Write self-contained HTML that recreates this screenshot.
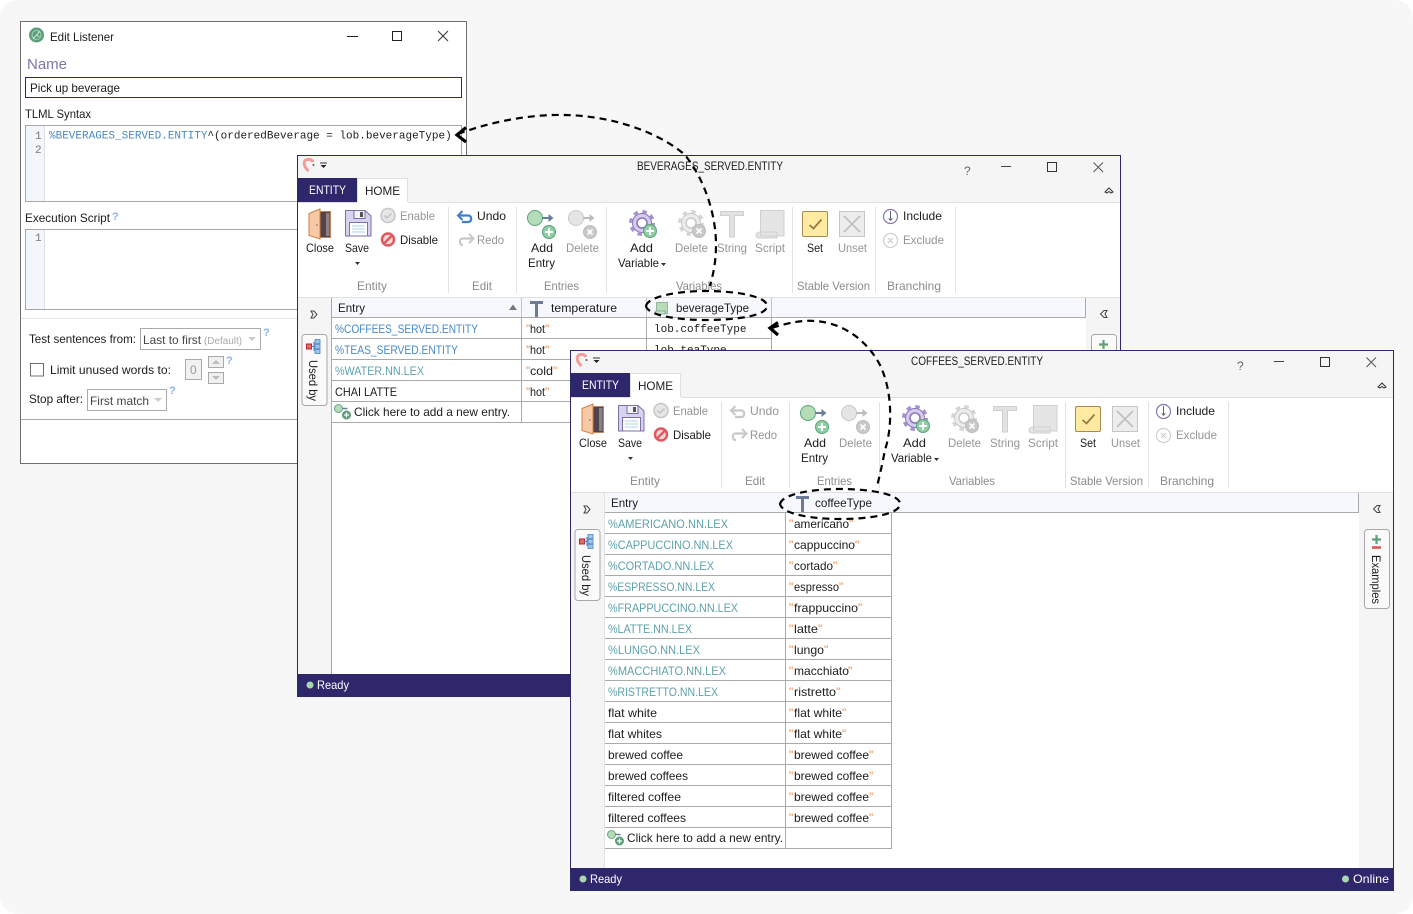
<!DOCTYPE html>
<html><head><meta charset="utf-8"><title>Listener</title>
<style>
html,body{margin:0;padding:0;background:#fff;width:1413px;height:914px;overflow:hidden}
svg{display:block;font-family:"Liberation Sans",sans-serif;font-size:12px}
text{fill:#1c1c1c}
.d{fill:#959595}.g{fill:#8b8b8b}.b{fill:#4a88c4}.c{fill:#5da2ab}.w{fill:#fff}
.m{font-family:"Liberation Mono",monospace;font-size:11px}
.q{fill:#ee8c4e}.h{fill:#8ab4e8;font-weight:bold}
</style></head><body>
<svg width="1413" height="914" viewBox="0 0 1413 914" xmlns="http://www.w3.org/2000/svg">
<defs>
<g id="tb">
<rect x="298" y="156" width="822" height="46" fill="#f5f5f5"/>
<path d="M308.500 171C303 166 303 160 307.500 159.500C310 159 312 160 313 162" fill="none" stroke="#f59c98" stroke-width="3"/><circle cx="313.500" cy="165" r="1" fill="#555"/>
<path d="M320 163h7" stroke="#333"/><path d="M320.500 165h6l-3 3z" fill="#222"/>
<path d="M1001 166.500h10" stroke="#444"/><rect x="1047.500" y="162.500" width="9" height="9" fill="none" stroke="#333"/><path d="M1093.500 162.500l9.500 9.500M1103 162.500l-9.500 9.500" stroke="#555" fill="none"/>
<path d="M1105 192l4-4 4 4-2 1-2-1.500-2 1.500z" fill="none" stroke="#333"/>
<rect x="298" y="178" width="59" height="24" fill="#2e276c"/>
<path d="M357.500 202V178.500H407.500V202" fill="#fff" stroke="#e0e0e0"/>
<rect x="298" y="203" width="822" height="94" fill="#fff"/><path d="M298 202.500h59M408 202.500h712M298 297.500h822" stroke="#e0e0e0"/>
<path d="M448.500 207v86M516.500 207v86M606.500 207v86M792.500 207v86M875.500 207v86M955.500 207v86" stroke="#e2e2e2"/>
<rect x="317.500" y="211.500" width="13" height="26" fill="#51434a" stroke="#c0875a"/><rect x="326" y="213" width="3.500" height="23" fill="#8b8087"/>
<path d="M309 213.500L320 209V239L309 235.500Z" fill="#f7c9a5" stroke="#d27f45"/><circle cx="317" cy="225" r=".8" fill="#a55"/>
<path d="M345.500 210.500H365L371 216V236H345.500Z" fill="#d8d2ee" stroke="#7b70a8"/><rect x="354" y="210.500" width="11" height="8" fill="#f3f2f8" stroke="#7b70a8"/><rect x="360" y="212" width="3" height="5" fill="#555"/><rect x="349.500" y="222.500" width="18" height="13.500" fill="#fff" stroke="#7b70a8"/><path d="M352 226h13M352 229h13M352 232h13" stroke="#a8d0ec"/>
<circle cx="388" cy="215.500" r="7" fill="#e6e6e6" stroke="#c6c6c6" stroke-width="1.500"/><path d="M384.500 215.500l2.500 2.500 4.500-4.500" fill="none" stroke="#bdbdbd" stroke-width="1.300"/>
<circle cx="388" cy="239.500" r="6" fill="#f9dada" stroke="#df5a60" stroke-width="2.500"/><path d="M384 243.500l8-8" stroke="#df5a60" stroke-width="2.500"/>
<circle cx="535" cy="218" r="7.500" fill="#b5dcb8" stroke="#5da279"/><path d="M542.500 218h7" stroke="#667f9c" stroke-width="2"/><path d="M548.500 214l5 4-5 4z" fill="#667f9c"/>
<circle cx="549" cy="232" r="6.500" fill="#8fcda2" stroke="#5da279"/><path d="M549 228v8M545 232h8" stroke="#fff" stroke-width="2"/>
<circle cx="576" cy="218" r="7.500" fill="#e5e5e5" stroke="#c8c8c8"/><path d="M583.500 218h7" stroke="#bcbcbc" stroke-width="2"/><path d="M589.500 214l5 4-5 4z" fill="#bcbcbc"/>
<circle cx="590" cy="232" r="6.500" fill="#c9c9c9" stroke="#bbb"/><path d="M587.500 229.500l5 5M592.500 229.500l-5 5" stroke="#fff" stroke-width="1.700"/>
<circle cx="642" cy="223" r="11.500" fill="none" stroke="#a692d0" stroke-width="3" stroke-dasharray="4.500 4.530"/><circle cx="642" cy="223" r="9.500" fill="#d5cbec" stroke="#8a76b8"/><circle cx="642" cy="223" r="5" fill="#fff" stroke="#8a76b8" stroke-width="1.500"/>
<circle cx="650" cy="231" r="6.500" fill="#8fcda2" stroke="#5da279"/><path d="M650 227v8M646 231h8" stroke="#fff" stroke-width="2"/>
<circle cx="691" cy="223" r="11.500" fill="none" stroke="#d5d5d5" stroke-width="3" stroke-dasharray="4.500 4.530"/><circle cx="691" cy="223" r="9.500" fill="#ececec" stroke="#c9c9c9"/><circle cx="691" cy="223" r="5" fill="#fff" stroke="#c9c9c9" stroke-width="1.500"/>
<circle cx="699" cy="231" r="6.500" fill="#c9c9c9" stroke="#bbb"/><path d="M696.500 228.500l5 5M701.500 228.500l-5 5" stroke="#fff" stroke-width="1.700"/>
<path d="M720.500 211.500h23v4h-9v21.500h-5V215.500h-9z" fill="#e2e2e2" stroke="#cfcfcf"/>
<path d="M760.500 210.500H784V236H762a5 3 0 0 1-1.500-1zM756 236a4 3.500 0 0 1 4-4h17v6h-17a4 3 0 0 1-4-2z" fill="#e5e5e5" stroke="#cfcfcf"/>
<rect x="802.500" y="211.500" width="25" height="25" rx="1.500" fill="#feeba1" stroke="#a98a4e"/><path d="M809.500 225l4 3.500 8-9" fill="none" stroke="#957a45" stroke-width="1.800"/>
<rect x="839.500" y="211.500" width="25" height="25" fill="#ededed" stroke="#c6c6c6"/><path d="M844 216l16 16M860 216l-16 16" stroke="#c2c2c2" stroke-width="1.800"/>
<circle cx="890.500" cy="216.500" r="7" fill="#fff" stroke="#8a76b0" stroke-width="1.200"/><path d="M890.500 211v8" stroke="#5b6685"/><path d="M888 218.500h5l-2.500 2.500z" fill="#5b6685"/>
<circle cx="890.500" cy="240.500" r="7" fill="#fff" stroke="#cfcfcf" stroke-width="1.200"/><path d="M888 238l5 5M893 238l-5 5" stroke="#c8c8c8"/>
<rect x="298" y="298" width="34" height="376" fill="#f5f5f5"/>
<rect x="1086" y="298" width="34" height="376" fill="#f5f5f5"/>
<path d="M311 311l3 0 3 3.500-3 3.500-3 0 2-3.500z" fill="none" stroke="#444"/>
<path d="M1107 310.500h-3l-3.500 3.500 3.500 3.500h3l-2-3.500z" fill="none" stroke="#444"/>
<rect x="298" y="674" width="822" height="23" fill="#2e276c"/><circle cx="310" cy="685" r="3.500" fill="#a9d8b0"/>
<rect x="302" y="334.500" width="25" height="71" rx="3" fill="#fafafa" stroke="#a8a8a8"/>
<rect x="306.500" y="344" width="5" height="5" fill="#e26a6a" stroke="#b23"/><path d="M311 346.500h3M314 342v9" stroke="#4a80c0"/><path d="M315 339.500h5v4h-5zM315 344.500h5v4h-5zM315 349.500h5v4h-5z" fill="#9ec6ec" stroke="#4a80c0" stroke-width=".8"/>
</g>
<path id="ht" d="M0 0h13v3h-5v13h-3V3H0z" fill="#6d7c96"/>
<g id="ca"><circle cx="4.500" cy="4.500" r="4" fill="#b5dcb8" stroke="#6aa57f"/><path d="M8.500 4.500h5" stroke="#667f9c" stroke-width="1.500"/><circle cx="12.500" cy="11" r="4.500" fill="#5d9d7b"/><path d="M12.500 8.500v5M10 11h5" stroke="#fff" stroke-width="1.300"/></g>
</defs>

<rect width="1413" height="914" rx="18" fill="#f7f7f7"/>

<!-- Window 1 -->
<rect x="20.500" y="21.500" width="446" height="442" fill="#fff" stroke="#6f6f6f"/>
<circle cx="36.500" cy="35" r="7.500" fill="#5a9f7a"/><circle cx="36.500" cy="35" r="4.500" fill="none" stroke="#a8d2b8"/><path d="M33 39l7-8M36.500 35l3 2" stroke="#cfe6d8" stroke-width="1"/>
<text x="50" y="41" textLength="64" lengthAdjust="spacingAndGlyphs">Edit Listener</text>
<path d="M347 36.500h11" stroke="#222"/><rect x="392.500" y="31.500" width="9" height="9" fill="none" stroke="#222"/><path d="M438 31l10 10M448 31l-10 10" stroke="#333"/>
<text x="27" y="69" style="font-size:15px;fill:#7d76a8" textLength="40" lengthAdjust="spacingAndGlyphs">Name</text>
<rect x="25.500" y="77.500" width="436" height="20" fill="#fff" stroke="#2e2769"/>
<text x="30" y="92" textLength="90" lengthAdjust="spacingAndGlyphs">Pick up beverage</text>
<text x="25" y="118" textLength="66" lengthAdjust="spacingAndGlyphs">TLML Syntax</text>
<rect x="25.500" y="125.500" width="436" height="76" fill="#fff" stroke="#a8a8a8"/>
<rect x="26" y="126" width="18" height="75" fill="#f4f6fe"/><path d="M44.500 126v75" stroke="#dcdee8"/>
<text class="m" x="35" y="139" style="fill:#777">1</text><text class="m" x="35" y="153" style="fill:#777">2</text>
<text class="m" x="49" y="138.500"><tspan class="b">%BEVERAGES_SERVED.ENTITY</tspan>^(orderedBeverage = lob.beverageType)</text>
<text x="25" y="222" textLength="85" lengthAdjust="spacingAndGlyphs">Execution Script</text><text class="h" x="112" y="220" style="font-size:11px">?</text>
<rect x="25.500" y="229.500" width="436" height="80" fill="#fff" stroke="#a8a8a8"/>
<rect x="26" y="230" width="18" height="79" fill="#f4f6fe"/><path d="M44.500 230v79" stroke="#dcdee8"/>
<text class="m" x="35" y="241" style="fill:#777">1</text>
<path d="M21 318.500h445" stroke="#e4e4e4"/>
<text x="29" y="343" textLength="107" lengthAdjust="spacingAndGlyphs">Test sentences from:</text>
<rect x="140.500" y="328.500" width="120" height="21" fill="#fff" stroke="#aaa"/>
<text x="143" y="344" textLength="58" lengthAdjust="spacingAndGlyphs" style="fill:#444">Last to first</text><text x="204" y="344" textLength="38" lengthAdjust="spacingAndGlyphs" style="font-size:10.500px;fill:#aaa">(Default)</text>
<path d="M248 337h8l-4 4z" fill="#ccc"/>
<text class="h" x="263" y="336" style="font-size:11px">?</text>
<rect x="30.500" y="363.500" width="13" height="12.500" fill="#fff" stroke="#6f6f6f"/>
<text x="50" y="374" textLength="121" lengthAdjust="spacingAndGlyphs">Limit unused words to:</text>
<rect x="185.500" y="359.500" width="16" height="20" fill="#f1f1f1" stroke="#aaa"/><text x="190" y="374" style="fill:#999">0</text>
<rect x="208.500" y="356.500" width="15" height="11" fill="#f1f1f1" stroke="#aaa"/><path d="M212 364l4-4 4 4z" fill="#bbb"/>
<rect x="208.500" y="372.500" width="15" height="11" fill="#f1f1f1" stroke="#aaa"/><path d="M212 376h8l-4 4z" fill="#bbb"/>
<text class="h" x="226" y="364" style="font-size:11px">?</text>
<text x="29" y="403" textLength="54" lengthAdjust="spacingAndGlyphs">Stop after:</text>
<rect x="87.500" y="389.500" width="79" height="21" fill="#fff" stroke="#aaa"/>
<text x="90" y="405" textLength="59" lengthAdjust="spacingAndGlyphs" style="fill:#444">First match</text><path d="M154 398h8l-4 4z" fill="#ccc"/>
<text class="h" x="169" y="394" style="font-size:11px">?</text>
<path d="M21 419.500h445" stroke="#a8a8a8"/>

<!-- Window 2 -->
<rect x="297.500" y="155.500" width="823" height="541" fill="#fff" stroke="#2e2769"/>
<use href="#tb"/>
<path d="M462.500 211l-4.500 4.500 4.500 4.500" fill="none" stroke="#3f7fc8" stroke-width="2"/><path d="M459 215.500h10a3.500 3.500 0 0 1 0 6.500h-7" fill="none" stroke="#3f7fc8" stroke-width="2.200"/>
<path d="M469 234l4.500 4.500-4.500 4.500" fill="none" stroke="#c8c8c8" stroke-width="2"/><path d="M472 238.500h-10a3.500 3.500 0 0 0 0 6.500h1" fill="none" stroke="#c8c8c8" stroke-width="2.200"/>
<text x="637" y="170" textLength="146" lengthAdjust="spacingAndGlyphs">BEVERAGES_SERVED.ENTITY</text>
<text x="964" y="175" style="fill:#666">?</text>
<text class="w" x="309" y="194" textLength="37" lengthAdjust="spacingAndGlyphs">ENTITY</text><text x="365" y="195" textLength="35" lengthAdjust="spacingAndGlyphs">HOME</text>
<text x="306" y="252" textLength="28" lengthAdjust="spacingAndGlyphs">Close</text><text x="345" y="252" textLength="24" lengthAdjust="spacingAndGlyphs">Save</text><path d="M355 262h5l-2.500 3z" fill="#333"/>
<text class="d" x="400" y="220" textLength="35" lengthAdjust="spacingAndGlyphs">Enable</text><text x="400" y="244" textLength="38" lengthAdjust="spacingAndGlyphs">Disable</text>
<text x="477" y="220" textLength="29" lengthAdjust="spacingAndGlyphs">Undo</text><text class="d" x="477" y="244" textLength="27" lengthAdjust="spacingAndGlyphs">Redo</text>
<text x="531" y="252" textLength="22" lengthAdjust="spacingAndGlyphs">Add</text><text x="528" y="267" textLength="27" lengthAdjust="spacingAndGlyphs">Entry</text><text class="d" x="566" y="252" textLength="33" lengthAdjust="spacingAndGlyphs">Delete</text>
<text x="630" y="252" textLength="23" lengthAdjust="spacingAndGlyphs">Add</text><text x="618" y="267" textLength="41" lengthAdjust="spacingAndGlyphs">Variable</text><path d="M661 263h5l-2.500 3z" fill="#333"/>
<text class="d" x="675" y="252" textLength="33" lengthAdjust="spacingAndGlyphs">Delete</text><text class="d" x="717" y="252" textLength="30" lengthAdjust="spacingAndGlyphs">String</text><text class="d" x="755" y="252" textLength="30" lengthAdjust="spacingAndGlyphs">Script</text>
<text x="807" y="252" textLength="16" lengthAdjust="spacingAndGlyphs">Set</text><text class="d" x="838" y="252" textLength="29" lengthAdjust="spacingAndGlyphs">Unset</text>
<text x="903" y="220" textLength="39" lengthAdjust="spacingAndGlyphs">Include</text><text class="d" x="903" y="244" textLength="41" lengthAdjust="spacingAndGlyphs">Exclude</text>
<text class="g" x="357" y="290" textLength="30" lengthAdjust="spacingAndGlyphs">Entity</text><text class="g" x="472" y="290" textLength="20" lengthAdjust="spacingAndGlyphs">Edit</text><text class="g" x="544" y="290" textLength="35" lengthAdjust="spacingAndGlyphs">Entries</text><text class="g" x="676" y="290" textLength="46" lengthAdjust="spacingAndGlyphs">Variables</text><text class="g" x="797" y="290" textLength="73" lengthAdjust="spacingAndGlyphs">Stable Version</text><text class="g" x="887" y="290" textLength="54" lengthAdjust="spacingAndGlyphs">Branching</text>
<rect x="332" y="298" width="754" height="19" fill="#f6f8fe"/>
<path d="M332 317.500h753.500V298M332 338.500h440M332 359.500h440M332 380.500h440M332 401.500h240M332 422.500h240M331.500 298v376M521.500 298v125M646.500 298v125M771.500 317v106" stroke="#aaa" fill="none"/><path d="M521.500 298v19M646.500 298v19M771.500 298v19" stroke="#c4c4c4"/>
<text x="338" y="312" textLength="27" lengthAdjust="spacingAndGlyphs">Entry</text><path d="M509 310l4-5.500 4 5.500z" fill="#777"/>
<use href="#ht" x="530" y="301"/><text x="551" y="312" textLength="66" lengthAdjust="spacingAndGlyphs">temperature</text>
<rect x="656.500" y="302.500" width="11" height="11" fill="#b8dcb8" stroke="#8fb89a"/><path d="M655 312.500a1.500 1.500 0 0 1 2-1.500h8v3h-8a1.500 1.500 0 0 1-2-1.500z" fill="#c9e3c9" stroke="#7c9a92" stroke-width=".8"/>
<text x="676" y="312" textLength="73" lengthAdjust="spacingAndGlyphs">beverageType</text>
<text class="b" x="335" y="333" textLength="143" lengthAdjust="spacingAndGlyphs">%COFFEES_SERVED.ENTITY</text>
<text class="b" x="335" y="354" textLength="123" lengthAdjust="spacingAndGlyphs">%TEAS_SERVED.ENTITY</text>
<text class="c" x="335" y="375" textLength="89" lengthAdjust="spacingAndGlyphs">%WATER.NN.LEX</text>
<text x="335" y="396" textLength="62" lengthAdjust="spacingAndGlyphs">CHAI LATTE</text>
<use href="#ca" x="334" y="404"/><text x="354" y="416" textLength="156" lengthAdjust="spacingAndGlyphs">Click here to add a new entry.</text>
<text class="q" x="526" y="333">"</text><text x="530" y="333" textLength="15" lengthAdjust="spacingAndGlyphs">hot</text><text class="q" x="545" y="333">"</text>
<text class="q" x="526" y="354">"</text><text x="530" y="354" textLength="15" lengthAdjust="spacingAndGlyphs">hot</text><text class="q" x="545" y="354">"</text>
<text class="q" x="526" y="375">"</text><text x="530" y="375" textLength="23" lengthAdjust="spacingAndGlyphs">cold</text><text class="q" x="553" y="375">"</text>
<text class="q" x="526" y="396">"</text><text x="530" y="396" textLength="15" lengthAdjust="spacingAndGlyphs">hot</text><text class="q" x="545" y="396">"</text>
<text class="m" x="654" y="332">lob.coffeeType</text><text class="m" x="654" y="353">lob.teaType</text>
<text x="309" y="360" transform="rotate(90 309 360)" textLength="41" lengthAdjust="spacingAndGlyphs">Used by</text>
<rect x="1091.500" y="334.500" width="25" height="60" rx="3" fill="#fafafa" stroke="#a8a8a8"/><path d="M1103.500 340v9M1099 344.500h9" stroke="#5da279" stroke-width="2.200"/>
<text class="w" x="317" y="689" textLength="32" lengthAdjust="spacingAndGlyphs">Ready</text>

<!-- Window 3 -->
<rect x="570.500" y="350.500" width="823" height="540" fill="#fff" stroke="#2e2769"/>
<use href="#tb" x="273" y="195"/>
<rect x="570" y="868" width="824" height="23" fill="#2e276c"/><rect x="570" y="891" width="825" height="3" fill="#f7f7f7"/><circle cx="583" cy="879" r="3.500" fill="#a9d8b0"/>
<path d="M735.500 406l-4.500 4.500 4.500 4.500" fill="none" stroke="#c8c8c8" stroke-width="2"/><path d="M732 410.500h10a3.500 3.500 0 0 1 0 6.500h-7" fill="none" stroke="#c8c8c8" stroke-width="2.200"/>
<path d="M742 429l4.500 4.500-4.500 4.500" fill="none" stroke="#c8c8c8" stroke-width="2"/><path d="M745 433.500h-10a3.500 3.500 0 0 0 0 6.500h1" fill="none" stroke="#c8c8c8" stroke-width="2.200"/>
<text x="911" y="365" textLength="132" lengthAdjust="spacingAndGlyphs">COFFEES_SERVED.ENTITY</text>
<text x="1237" y="370" style="fill:#666">?</text>
<text class="w" x="582" y="389" textLength="37" lengthAdjust="spacingAndGlyphs">ENTITY</text><text x="638" y="390" textLength="35" lengthAdjust="spacingAndGlyphs">HOME</text>
<text x="579" y="447" textLength="28" lengthAdjust="spacingAndGlyphs">Close</text><text x="618" y="447" textLength="24" lengthAdjust="spacingAndGlyphs">Save</text><path d="M628 457h5l-2.500 3z" fill="#333"/>
<text class="d" x="673" y="415" textLength="35" lengthAdjust="spacingAndGlyphs">Enable</text><text x="673" y="439" textLength="38" lengthAdjust="spacingAndGlyphs">Disable</text>
<text class="d" x="750" y="415" textLength="29" lengthAdjust="spacingAndGlyphs">Undo</text><text class="d" x="750" y="439" textLength="27" lengthAdjust="spacingAndGlyphs">Redo</text>
<text x="804" y="447" textLength="22" lengthAdjust="spacingAndGlyphs">Add</text><text x="801" y="462" textLength="27" lengthAdjust="spacingAndGlyphs">Entry</text><text class="d" x="839" y="447" textLength="33" lengthAdjust="spacingAndGlyphs">Delete</text>
<text x="903" y="447" textLength="23" lengthAdjust="spacingAndGlyphs">Add</text><text x="891" y="462" textLength="41" lengthAdjust="spacingAndGlyphs">Variable</text><path d="M934 458h5l-2.500 3z" fill="#333"/>
<text class="d" x="948" y="447" textLength="33" lengthAdjust="spacingAndGlyphs">Delete</text><text class="d" x="990" y="447" textLength="30" lengthAdjust="spacingAndGlyphs">String</text><text class="d" x="1028" y="447" textLength="30" lengthAdjust="spacingAndGlyphs">Script</text>
<text x="1080" y="447" textLength="16" lengthAdjust="spacingAndGlyphs">Set</text><text class="d" x="1111" y="447" textLength="29" lengthAdjust="spacingAndGlyphs">Unset</text>
<text x="1176" y="415" textLength="39" lengthAdjust="spacingAndGlyphs">Include</text><text class="d" x="1176" y="439" textLength="41" lengthAdjust="spacingAndGlyphs">Exclude</text>
<text class="g" x="630" y="485" textLength="30" lengthAdjust="spacingAndGlyphs">Entity</text><text class="g" x="745" y="485" textLength="20" lengthAdjust="spacingAndGlyphs">Edit</text><text class="g" x="817" y="485" textLength="35" lengthAdjust="spacingAndGlyphs">Entries</text><text class="g" x="949" y="485" textLength="46" lengthAdjust="spacingAndGlyphs">Variables</text><text class="g" x="1070" y="485" textLength="73" lengthAdjust="spacingAndGlyphs">Stable Version</text><text class="g" x="1160" y="485" textLength="54" lengthAdjust="spacingAndGlyphs">Branching</text>
<rect x="605" y="493" width="754" height="19" fill="#f6f8fe"/>
<path d="M605 512.500h753.500V493M605 533.500h286M605 554.500h286M605 575.500h286M605 596.500h286M605 617.500h286M605 638.500h286M605 659.500h286M605 680.500h286M605 701.500h286M605 722.500h286M605 743.500h286M605 764.500h286M605 785.500h286M605 806.500h286M605 827.500h286M605 848.500h286M785.500 512v337M891.500 512v337" stroke="#aaa" fill="none"/><path d="M604.500 493v375" stroke="#e2e2e2"/>
<text x="611" y="507" textLength="27" lengthAdjust="spacingAndGlyphs">Entry</text>
<use href="#ht" x="796" y="496"/><text x="815" y="507" textLength="57" lengthAdjust="spacingAndGlyphs">coffeeType</text>
<text class="c" x="608" y="528" textLength="120" lengthAdjust="spacingAndGlyphs">%AMERICANO.NN.LEX</text>
<text class="c" x="608" y="549" textLength="125" lengthAdjust="spacingAndGlyphs">%CAPPUCCINO.NN.LEX</text>
<text class="c" x="608" y="570" textLength="106" lengthAdjust="spacingAndGlyphs">%CORTADO.NN.LEX</text>
<text class="c" x="608" y="591" textLength="107" lengthAdjust="spacingAndGlyphs">%ESPRESSO.NN.LEX</text>
<text class="c" x="608" y="612" textLength="130" lengthAdjust="spacingAndGlyphs">%FRAPPUCCINO.NN.LEX</text>
<text class="c" x="608" y="633" textLength="84" lengthAdjust="spacingAndGlyphs">%LATTE.NN.LEX</text>
<text class="c" x="608" y="654" textLength="92" lengthAdjust="spacingAndGlyphs">%LUNGO.NN.LEX</text>
<text class="c" x="608" y="675" textLength="118" lengthAdjust="spacingAndGlyphs">%MACCHIATO.NN.LEX</text>
<text class="c" x="608" y="696" textLength="110" lengthAdjust="spacingAndGlyphs">%RISTRETTO.NN.LEX</text>
<text x="608" y="717" textLength="49" lengthAdjust="spacingAndGlyphs">flat white</text>
<text x="608" y="738" textLength="54" lengthAdjust="spacingAndGlyphs">flat whites</text>
<text x="608" y="759" textLength="75" lengthAdjust="spacingAndGlyphs">brewed coffee</text>
<text x="608" y="780" textLength="80" lengthAdjust="spacingAndGlyphs">brewed coffees</text>
<text x="608" y="801" textLength="73" lengthAdjust="spacingAndGlyphs">filtered coffee</text>
<text x="608" y="822" textLength="78" lengthAdjust="spacingAndGlyphs">filtered coffees</text>
<use href="#ca" x="607" y="830"/><text x="627" y="842" textLength="156" lengthAdjust="spacingAndGlyphs">Click here to add a new entry.</text>
<text class="q" x="789" y="528">"</text><text x="794" y="528" textLength="55" lengthAdjust="spacingAndGlyphs">americano</text><text class="q" x="849" y="528">"</text>
<text class="q" x="789" y="549">"</text><text x="794" y="549" textLength="61" lengthAdjust="spacingAndGlyphs">cappuccino</text><text class="q" x="855" y="549">"</text>
<text class="q" x="789" y="570">"</text><text x="794" y="570" textLength="39" lengthAdjust="spacingAndGlyphs">cortado</text><text class="q" x="833" y="570">"</text>
<text class="q" x="789" y="591">"</text><text x="794" y="591" textLength="45" lengthAdjust="spacingAndGlyphs">espresso</text><text class="q" x="839" y="591">"</text>
<text class="q" x="789" y="612">"</text><text x="794" y="612" textLength="64" lengthAdjust="spacingAndGlyphs">frappuccino</text><text class="q" x="858" y="612">"</text>
<text class="q" x="789" y="633">"</text><text x="794" y="633" textLength="24" lengthAdjust="spacingAndGlyphs">latte</text><text class="q" x="818" y="633">"</text>
<text class="q" x="789" y="654">"</text><text x="794" y="654" textLength="30" lengthAdjust="spacingAndGlyphs">lungo</text><text class="q" x="824" y="654">"</text>
<text class="q" x="789" y="675">"</text><text x="794" y="675" textLength="55" lengthAdjust="spacingAndGlyphs">macchiato</text><text class="q" x="848" y="675">"</text>
<text class="q" x="789" y="696">"</text><text x="794" y="696" textLength="42" lengthAdjust="spacingAndGlyphs">ristretto</text><text class="q" x="836" y="696">"</text>
<text class="q" x="789" y="717">"</text><text x="794" y="717" textLength="48" lengthAdjust="spacingAndGlyphs">flat white</text><text class="q" x="842" y="717">"</text>
<text class="q" x="789" y="738">"</text><text x="794" y="738" textLength="48" lengthAdjust="spacingAndGlyphs">flat white</text><text class="q" x="842" y="738">"</text>
<text class="q" x="789" y="759">"</text><text x="794" y="759" textLength="75" lengthAdjust="spacingAndGlyphs">brewed coffee</text><text class="q" x="869" y="759">"</text>
<text class="q" x="789" y="780">"</text><text x="794" y="780" textLength="75" lengthAdjust="spacingAndGlyphs">brewed coffee</text><text class="q" x="869" y="780">"</text>
<text class="q" x="789" y="801">"</text><text x="794" y="801" textLength="75" lengthAdjust="spacingAndGlyphs">brewed coffee</text><text class="q" x="869" y="801">"</text>
<text class="q" x="789" y="822">"</text><text x="794" y="822" textLength="75" lengthAdjust="spacingAndGlyphs">brewed coffee</text><text class="q" x="869" y="822">"</text>
<text x="582" y="555" transform="rotate(90 582 555)" textLength="41" lengthAdjust="spacingAndGlyphs">Used by</text>
<rect x="1364.500" y="529.500" width="25" height="79" rx="3" fill="#fafafa" stroke="#a8a8a8"/><path d="M1376.500 535v9M1372 539.500h9" stroke="#5da279" stroke-width="2.200"/><path d="M1372 547.500h9" stroke="#d9534f" stroke-width="2.500"/>
<text x="1372" y="555" transform="rotate(90 1372 555)" textLength="49" lengthAdjust="spacingAndGlyphs">Examples</text>
<text class="w" x="590" y="883" textLength="32" lengthAdjust="spacingAndGlyphs">Ready</text>
<circle cx="1345.500" cy="879" r="3.500" fill="#a9d8b0"/><text class="w" x="1353" y="883" textLength="36" lengthAdjust="spacingAndGlyphs">Online</text>

<!-- Dashed annotations -->
<g fill="none" stroke="#000" stroke-width="2.200" stroke-dasharray="7 5">
<path d="M458 134C490 122 530 114 565 115C620 116 665 137 685 155C705 180 716 215 716 245C716 262 713 275 710 286"/>
<path d="M772 328C790 322 805 320 815 321C845 323 868 342 880 365C892 390 893 425 885 450C882 465 880 475 877 486"/>
<path d="M646 306C648 296 680 291 706 291C735 291 767 296 767 306C767 316 735 320 706 320C680 320 648 316 646 306Z"/>
<path d="M780 504C782 494 812 489 840 489C870 489 900 494 900 504C900 514 870 519 840 519C812 519 782 514 780 504Z"/>
</g>
<path d="M466 127.500L457 135L466 142M778 322.500L770 328L778 335" fill="none" stroke="#000" stroke-width="3.200"/>
</svg>
</body></html>
